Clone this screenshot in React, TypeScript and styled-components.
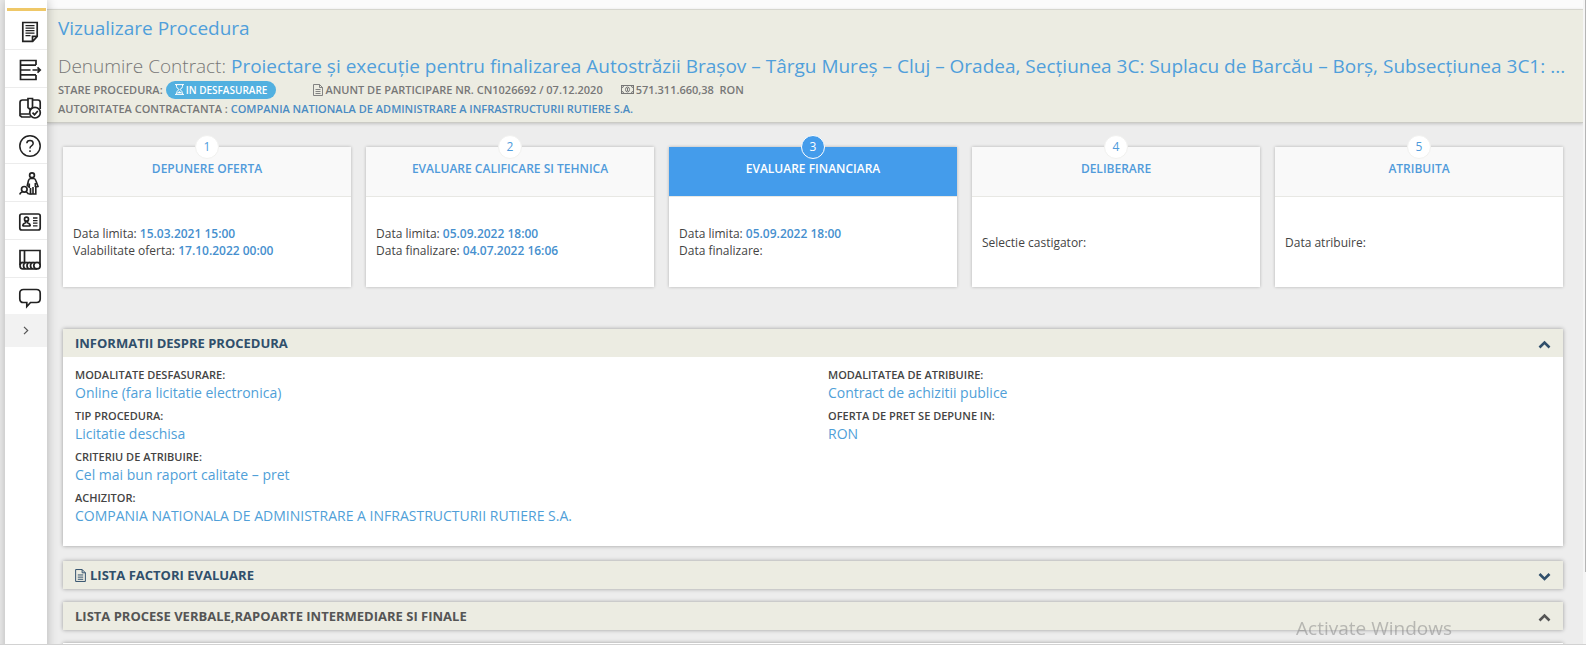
import React from "react";
import styled, { createGlobalStyle, css } from "styled-components";

const GlobalStyle = createGlobalStyle`
  *, *::before, *::after { box-sizing: border-box; }
  body {
    margin: 0;
    background: #ededed;
    color: #444;
    font-family: "Open Sans", "Liberation Sans", sans-serif;
    font-size: 12px;
    line-height: 17px;
    overflow: hidden;
  }
  h1, h2, h3, p, dl, dd, ul, ol { margin: 0; padding: 0; font-weight: inherit; font-size: inherit; }
  button { font: inherit; border: 0; background: none; padding: 0; cursor: pointer; }
`;

const Page = styled.div`
  display: flex;
  min-height: 100vh;
  padding-left: 5px;
`;

const Sidebar = styled.nav`
  flex: none;
  width: 42px;
  display: flex;
  flex-direction: column;
  background: #fff;
  box-shadow: 0 0 10px rgba(0, 0, 0, 0.25);
  z-index: 2;
  &::before {
    content: "";
    height: 3px;
    margin: 8px 1px 1px 2px;
    background: #efc868;
  }
`;

const NavButton = styled.button`
  display: flex;
  align-items: center;
  justify-content: flex-end;
  height: 38px;
  padding: 3px 5px 0 0;
  border-bottom: 1px solid #ececec;
  color: #222;
  svg { display: block; }
`;

const ExpandButton = styled(NavButton)`
  justify-content: center;
  height: 33px;
  margin-top: -2px;
  padding: 0;
  background: #f2f2f2;
  border-bottom: 0;
  color: #555;
`;

const Main = styled.main`
  flex: 1;
  min-width: 0;
  background: #ededed;
`;

const ScrollTrack = styled.div`
  flex: none;
  width: 3px;
  background: #f5f5f5;
  &::after {
    content: "";
    display: block;
    width: 1px;
    height: 572px;
    margin-left: 2px;
    background: #b5b5b5;
  }
`;

const TopBar = styled.div`
  height: 9px;
  background: #fbfbfb;
`;

const Header = styled.header`
  height: 114px;
  padding: 4px 12px 0 11px;
  background: #ecece2;
  border-top: 1px solid #d6d6ce;
  border-bottom: 1px solid #cbcbc5;
  box-shadow: 0 1px 3px rgba(0, 0, 0, 0.18);
`;

const PageTitle = styled.h1`
  color: #509fdb;
  font-size: 19px;
  line-height: 28px;
`;

const ContractTitle = styled.h2`
  margin-top: 10px;
  color: #777;
  font-size: 19px;
  font-weight: 300;
  line-height: 28px;
  white-space: nowrap;
  overflow: hidden;
  text-overflow: ellipsis;
  span { color: #509fdb; font-weight: 400; }
`;

const MetaLine = styled.div`
  display: flex;
  align-items: center;
  color: #777;
  font-size: 11px;
  font-weight: 600;
  line-height: 19px;
  white-space: pre;
`;

const StatusPill = styled.span`
  display: inline-flex;
  align-items: center;
  gap: 2px;
  height: 18px;
  margin: 0 37px 0 3px;
  padding: 0 9px;
  border-radius: 9px;
  background: #52b0e0;
  color: #fff;
  font-size: 10px;
  line-height: 18px;
`;

const MetaItem = styled.span`
  display: inline-flex;
  align-items: center;
  gap: 2px;
  margin-right: 18px;
`;

const AuthorityLink = styled.a`
  color: #4a8bc2;
  text-decoration: none;
`;

const Steps = styled.ol`
  display: grid;
  grid-template-columns: repeat(5, minmax(0, 1fr));
  gap: 15px;
  padding: 24px 20px 0 16px;
  list-style: none;
`;

const StepCard = styled.li`
  position: relative;
  display: flex;
  flex-direction: column;
  height: 140px;
  background: #fff;
  box-shadow: 0 0 3px rgba(0, 0, 0, 0.25);
`;

const StepHead = styled.div<{ $active?: boolean }>`
  height: 50px;
  padding-top: 13px;
  border-bottom: 1px solid #e8e8e4;
  background: #f9f9f9;
  color: #509bdb;
  font-weight: 600;
  text-align: center;
  ${(p) => p.$active && css`
    background: #449ceb;
    color: #fff;
  `}
`;

const StepBadge = styled.span<{ $active?: boolean }>`
  position: absolute;
  top: -12px;
  left: calc(50% - 12px);
  width: 24px;
  height: 24px;
  border: 1px solid ${(p) => (p.$active ? "#fff" : "#f1f1ef")};
  border-radius: 50%;
  background: ${(p) => (p.$active ? "#449ceb" : "#fff")};
  color: ${(p) => (p.$active ? "#fff" : "#509bdb")};
  font-size: 12px;
  line-height: 22px;
  text-align: center;
`;

const StepBody = styled.div`
  flex: 1;
  display: flex;
  flex-direction: column;
  justify-content: center;
  padding: 0 10px;
  span { color: #468fce; font-weight: 600; }
`;

const Panels = styled.div`
  display: flex;
  flex-direction: column;
  gap: 13px;
  padding: 42px 20px 0 16px;
`;

const Panel = styled.section<{ $open?: boolean }>`
  min-height: 28px;
  background: #fff;
  box-shadow: 0 0 4px rgba(0, 0, 0, 0.35);
  margin-bottom: ${(p) => (p.$open ? "2px" : "0")};
`;

const PanelToggle = styled.button<{ $muted?: boolean }>`
  display: flex;
  align-items: center;
  gap: 4px;
  width: 100%;
  height: 28px;
  padding: 0 12px;
  background: #ecece2;
  color: ${(p) => (p.$muted ? "#555" : "#304f6b")};
  font-size: 13px;
  font-weight: 700;
  text-align: left;
  svg:last-child { margin-left: auto; }
`;

const InfoGrid = styled.div`
  display: grid;
  grid-template-columns: minmax(0, 1fr) minmax(0, 1fr);
  column-gap: 30px;
  padding: 9px 12px 16px;
`;

const InfoItem = styled.div`
  margin-bottom: 5px;
  dt { color: #444; font-size: 11px; font-weight: 600; line-height: 18px; }
  dd { color: #509fd8; font-size: 14px; line-height: 18px; }
`;

const Watermark = styled.div`
  position: fixed;
  right: 134px;
  bottom: 4px;
  color: rgba(130, 130, 130, 0.5);
  font-size: 19px;
  line-height: 26px;
  z-index: 3;
  pointer-events: none;
`;

const BottomEdge = styled.div`
  position: fixed;
  left: 0;
  right: 0;
  bottom: 0;
  height: 1px;
  background: #d2d2d2;
  z-index: 4;
`;

type IconProps = { children: React.ReactNode };

const NavIcon = ({ children }: IconProps) => (
  <svg width="24" height="24" viewBox="0 0 24 24" fill="none" stroke="currentColor" strokeWidth="1.700" aria-hidden="true">
    {children}
  </svg>
);

const FileIcon = ({ size = 12 }: { size?: number }) => (
  <svg width={size - 2} height={size} viewBox="0 0 10 12" fill="none" stroke="currentColor" strokeWidth=".9" aria-hidden="true">
    <path d="M.5.5h6l3 3v8h-9zM6.500.5v3h3M2.500 5.500h5M2.500 7.500h5M2.500 9.500h5" />
  </svg>
);

const HourglassIcon = () => (
  <svg width="9" height="11" viewBox="0 0 9 11" fill="none" stroke="currentColor" aria-hidden="true">
    <path d="M0 .6h9M0 10.400h9M1.500 1v1.500Q1.500 4 4 5.500Q1.500 7 1.500 10M7.500 1v1.500Q7.500 4 5 5.500Q7.500 7 7.500 10" />
    <path d="M2.500 9l2-1.500 2 1.500z" fill="currentColor" strokeWidth=".5" />
  </svg>
);

const MoneyIcon = () => (
  <svg width="13" height="9" viewBox="0 0 13 9" fill="none" stroke="currentColor" aria-hidden="true">
    <rect x=".5" y=".5" width="12" height="8" />
    <path d="M1 2.500q1.500 0 1.500-1.500M12 2.500q-1.500 0-1.500-1.500M1 6.500q1.500 0 1.500 1.500M12 6.500q-1.500 0-1.500 1.500" />
    <ellipse cx="6.500" cy="4.500" rx="2" ry="2.500" />
    <path d="M6.500 3v3" />
  </svg>
);

const Chevron = ({ up }: { up?: boolean }) => (
  <svg width="13" height="13" viewBox="0 0 13 13" fill="none" stroke="currentColor" strokeWidth="2.600" aria-hidden="true">
    <path d={up ? "M1.500 10.500l5-5 5 5" : "M1.500 5l5 5 5-5"} />
  </svg>
);

const navItems = [
  {
    label: "Proceduri",
    icon: (
      <>
        <path d="M4.800 2.500h14.400v14l-4.500 4.800H4.800zM14.500 21v-4.700h4.700" />
        <path d="M7.500 5.700h9M7.500 8.200h9M7.500 10.700h9M7.500 13.200h9M7.500 15.700h5" strokeWidth="1.300" />
      </>
    ),
  },
  {
    label: "Initiere",
    icon: (
      <>
        <path d="M18 7V2.500H2.500v19H18V17M2.500 7.200H18M2.500 12h10M2.500 16.800H18" />
        <path d="M14.500 12h7M19.500 9.400l2.700 2.600-2.700 2.600" />
      </>
    ),
  },
  {
    label: "Contracte",
    icon: (
      <>
        <path d="M10 4H4.500Q2 4 2 6.500v13L3.700 21h9M14.500 4H20q2.200 0 2.200 2.500V13M2 18h9M10 2.500h4.500v9l-2.200 2-2.300-2z" />
        <circle cx="17" cy="16.700" r="5.300" fill="#fff" />
        <path d="M14.500 16.700l2 2 3.300-3.700" />
      </>
    ),
  },
  {
    label: "Ajutor",
    icon: (
      <>
        <circle cx="12" cy="12" r="10.200" strokeWidth="1.500" />
        <path d="M8.800 9.200Q9 6.500 12 6.500T15.200 9.300Q15.200 10.800 13.500 11.800T12 14.500M12 16.200v1.800" strokeWidth="1.500" />
      </>
    ),
  },
  {
    label: "Operatori",
    icon: (
      <>
        <circle cx="14" cy="3.300" r="2.400" />
        <path d="M11.300 16V11.500M11.300 15l-2-1.500 1.200-5Q11 6.500 13 6.500h2.500q1.700 0 2.300 2L20 14.500l-2.200.6V22H15v-7M17.300 11v4M12.500 22H15" strokeWidth="1.600" />
        <circle cx="6.300" cy="17.300" r="2.800" />
        <path d="M2 22.500q0-2 2.500-2.500M8 19.500l2.500 2.500M10.500 22h2v-6" />
      </>
    ),
  },
  {
    label: "Date de contact",
    icon: (
      <>
        <rect x="1.800" y="4" width="20.400" height="16" rx="2" />
        <circle cx="8.500" cy="9.200" r="2" />
        <path d="M4.800 16q0-2.500 2.700-3.300v-1.500M12.200 16q0-2.500-2.700-3.300v-1.500M4.500 16h8" />
        <path d="M15 8h4.500M15 10.600h4.500M15 13.200h4.500M15 15.800h4.500" strokeWidth="1.300" />
      </>
    ),
  },
  {
    label: "Catalog",
    icon: (
      <>
        <path d="M2 17V2.500h20V17M6.500 2.500V14M2 14.500h20" />
        <path d="M5 14.500q-3 0-3 3.200T5 21h14M8.500 14.500q-3 0-3 3.200t3 3.300M12 14.500q-3 0-3 3.200t3 3.300M15.500 14.500q-3 0-3 3.200t3 3.300" />
        <circle cx="19" cy="17.700" r="3.200" fill="#fff" />
      </>
    ),
  },
  {
    label: "Mesaje",
    icon: <path d="M5.500 3.500h13q3.700 0 3.700 3.700v5.600q0 3.700-3.700 3.700h-6L8.800 20.500V16.500H5.500q-3.700 0-3.700-3.700V7.200q0-3.700 3.700-3.700z" />,
  },
];

type Row = { label: string; value?: string };

const steps: { title: string; active?: boolean; rows: Row[] }[] = [
  { title: "DEPUNERE OFERTA", rows: [{ label: "Data limita:", value: "15.03.2021 15:00" }, { label: "Valabilitate oferta:", value: "17.10.2022 00:00" }] },
  { title: "EVALUARE CALIFICARE SI TEHNICA", rows: [{ label: "Data limita:", value: "05.09.2022 18:00" }, { label: "Data finalizare:", value: "04.07.2022 16:06" }] },
  { title: "EVALUARE FINANCIARA", active: true, rows: [{ label: "Data limita:", value: "05.09.2022 18:00" }, { label: "Data finalizare:" }] },
  { title: "DELIBERARE", rows: [{ label: "Selectie castigator:" }] },
  { title: "ATRIBUITA", rows: [{ label: "Data atribuire:" }] },
];

const infoColumns: Row[][] = [
  [
    { label: "MODALITATE DESFASURARE:", value: "Online (fara licitatie electronica)" },
    { label: "TIP PROCEDURA:", value: "Licitatie deschisa" },
    { label: "CRITERIU DE ATRIBUIRE:", value: "Cel mai bun raport calitate – pret" },
    { label: "ACHIZITOR:", value: "COMPANIA NATIONALA DE ADMINISTRARE A INFRASTRUCTURII RUTIERE S.A." },
  ],
  [
    { label: "MODALITATEA DE ATRIBUIRE:", value: "Contract de achizitii publice" },
    { label: "OFERTA DE PRET SE DEPUNE IN:", value: "RON" },
  ],
];

export default function App() {
  return (
    <>
      <GlobalStyle />
      <Page>
        <Sidebar>
          {navItems.map((item) => (
            <NavButton key={item.label} type="button" aria-label={item.label}>
              <NavIcon>{item.icon}</NavIcon>
            </NavButton>
          ))}
          <ExpandButton type="button" aria-label="Extinde meniul">
            <svg width="6" height="9" viewBox="0 0 6 9" fill="none" stroke="currentColor" strokeWidth="1.200" aria-hidden="true">
              <path d="M1 .8l3.700 3.700L1 8.200" />
            </svg>
          </ExpandButton>
        </Sidebar>

        <Main>
          <TopBar />
          <Header>
            <PageTitle>Vizualizare Procedura</PageTitle>
            <ContractTitle>
              Denumire Contract:{" "}
              <span>
                Proiectare și execuție pentru finalizarea Autostrăzii Brașov – Târgu Mureș – Cluj – Oradea, Secțiunea 3C:
                Suplacu de Barcău – Borș, Subsecțiunea 3C1: ...
              </span>
            </ContractTitle>
            <MetaLine>
              STARE PROCEDURA:
              <StatusPill><HourglassIcon />IN DESFASURARE</StatusPill>
              <MetaItem><FileIcon />ANUNT DE PARTICIPARE NR. CN1026692 / 07.12.2020</MetaItem>
              <MetaItem><MoneyIcon />{"571.311.660,38  RON"}</MetaItem>
            </MetaLine>
            <MetaLine>
              {"AUTORITATEA CONTRACTANTA : "}
              <AuthorityLink href="#autoritate">COMPANIA NATIONALA DE ADMINISTRARE A INFRASTRUCTURII RUTIERE S.A.</AuthorityLink>
            </MetaLine>
          </Header>

          <Steps>
            {steps.map((step, i) => (
              <StepCard key={step.title}>
                <StepHead $active={step.active}>{step.title}</StepHead>
                <StepBadge $active={step.active}>{i + 1}</StepBadge>
                <StepBody>
                  {step.rows.map((row) => (
                    <p key={row.label}>{row.label} {row.value && <span>{row.value}</span>}</p>
                  ))}
                </StepBody>
              </StepCard>
            ))}
          </Steps>

          <Panels>
            <Panel $open>
              <PanelToggle type="button" aria-expanded="true">
                INFORMATII DESPRE PROCEDURA
                <Chevron up />
              </PanelToggle>
              <InfoGrid>
                {infoColumns.map((items, i) => (
                  <dl key={i}>
                    {items.map((item) => (
                      <InfoItem key={item.label}>
                        <dt>{item.label}</dt>
                        <dd>{item.value}</dd>
                      </InfoItem>
                    ))}
                  </dl>
                ))}
              </InfoGrid>
            </Panel>
            <Panel>
              <PanelToggle type="button" aria-expanded="false">
                <FileIcon size={13} />
                LISTA FACTORI EVALUARE
                <Chevron />
              </PanelToggle>
            </Panel>
            <Panel>
              <PanelToggle type="button" aria-expanded="true" $muted>
                LISTA PROCESE VERBALE,RAPOARTE INTERMEDIARE SI FINALE
                <Chevron up />
              </PanelToggle>
            </Panel>
            <Panel />
          </Panels>
        </Main>
        <ScrollTrack />
      </Page>
      <Watermark>Activate Windows</Watermark>
      <BottomEdge />
    </>
  );
}
